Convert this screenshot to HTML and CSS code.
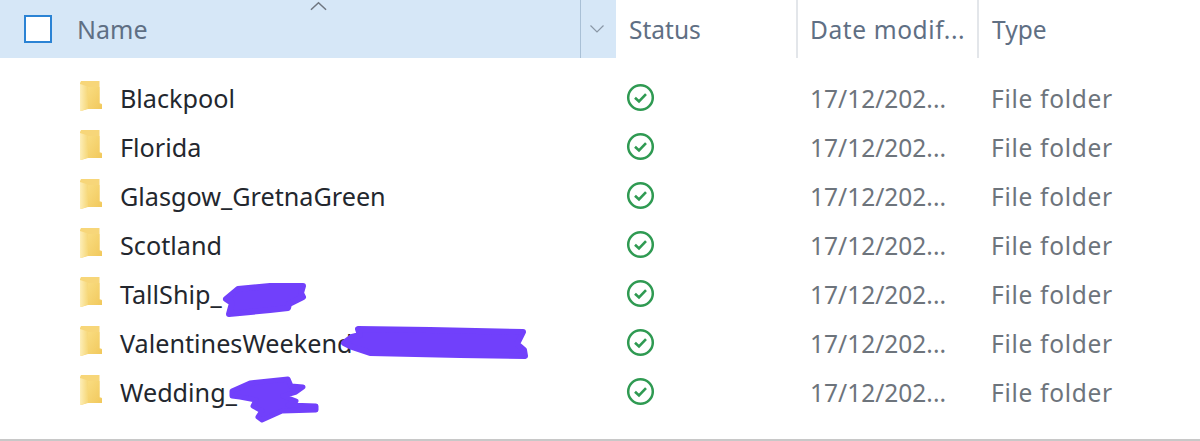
FILE: index.html
```html
<!DOCTYPE html>
<html lang="en">
<head>
<meta charset="utf-8">
<title>Folder list</title>
<link rel="stylesheet" href="styles.css">
</head>
<body>
<svg width="0" height="0" class="defs" aria-hidden="true">
  <defs>
    <linearGradient id="fg" x1="0" x2="1" y1="0" y2="0">
      <stop offset="0" stop-color="#fdeeb8"/>
      <stop offset="1" stop-color="#f6d778"/>
    </linearGradient>
    <linearGradient id="fb" x1="0" x2="1" y1="0" y2="1">
      <stop offset="0" stop-color="#f9dc80"/>
      <stop offset="1" stop-color="#f1c85c"/>
    </linearGradient>
    <symbol id="folder" viewBox="0 0 22 30">
      <path d="M0 2 L1 0 H19.500 V22 L22 23 V28 H8 L1 30 L0 29Z" fill="#f7d679"/>
      <path d="M8 6 H19.500 V23 L22 23.500 V28 H8Z" fill="url(#fb)"/>
      <path d="M0 3 L8 5.500 V27.500 L1 30 L0 29Z" fill="url(#fg)"/>
    </symbol>
    <symbol id="check" viewBox="0 0 29 29">
      <circle cx="14.500" cy="14.500" r="12.300" fill="none" stroke="#2f9a52" stroke-width="2.500"/>
      <path d="M9 14.700 L13 18.500 L20 11.200" fill="none" stroke="#2f9a52" stroke-width="2.600"/>
    </symbol>
  </defs>
</svg>
<main class="view">
  <header class="head">
    <div class="cell-name">
      <span class="box"></span>
      <span>Name</span>
      <svg class="sort" viewBox="0 0 18 10"><path d="M1 9 L9 1.500 L17 9" fill="none" stroke="#6f7680" stroke-width="1.600"/></svg>
    </div>
    <div class="cell-drop">
      <svg class="drop" viewBox="0 0 14 8"><path d="M.5 .5 L7 7 L13.500 .5" fill="none" stroke="#8a97a6" stroke-width="1.200"/></svg>
    </div>
    <div class="cell-status">Status</div>
    <div class="cell-date">Date modif...</div>
    <div class="cell-type">Type</div>
  </header>
  <ul class="rows">
    <li class="row"><span class="r-name"><svg class="fold"><use href="#folder"/></svg>Blackpool</span><span class="r-status"><svg class="ok"><use href="#check"/></svg></span><span class="r-date">17/12/202...</span><span class="r-type">File folder</span></li>
    <li class="row"><span class="r-name"><svg class="fold"><use href="#folder"/></svg>Florida</span><span class="r-status"><svg class="ok"><use href="#check"/></svg></span><span class="r-date">17/12/202...</span><span class="r-type">File folder</span></li>
    <li class="row"><span class="r-name"><svg class="fold"><use href="#folder"/></svg>Glasgow_GretnaGreen</span><span class="r-status"><svg class="ok"><use href="#check"/></svg></span><span class="r-date">17/12/202...</span><span class="r-type">File folder</span></li>
    <li class="row"><span class="r-name"><svg class="fold"><use href="#folder"/></svg>Scotland</span><span class="r-status"><svg class="ok"><use href="#check"/></svg></span><span class="r-date">17/12/202...</span><span class="r-type">File folder</span></li>
    <li class="row"><span class="r-name"><svg class="fold"><use href="#folder"/></svg>TallShip_</span><span class="r-status"><svg class="ok"><use href="#check"/></svg></span><span class="r-date">17/12/202...</span><span class="r-type">File folder</span></li>
    <li class="row"><span class="r-name"><svg class="fold"><use href="#folder"/></svg>ValentinesWeekend</span><span class="r-status"><svg class="ok"><use href="#check"/></svg></span><span class="r-date">17/12/202...</span><span class="r-type">File folder</span></li>
    <li class="row"><span class="r-name"><svg class="fold"><use href="#folder"/></svg>Wedding_</span><span class="r-status"><svg class="ok"><use href="#check"/></svg></span><span class="r-date">17/12/202...</span><span class="r-type">File folder</span></li>
  </ul>
  <svg class="scribble" viewBox="0 0 1200 441" aria-hidden="true">
    <g fill="#7140fb" stroke="#7140fb" stroke-width="6" stroke-linecap="round" stroke-linejoin="round">
      <path d="M226 299 L238 289 L270 286 L303 286 L301 293 L303 297 L289 304 L288 308 L270 310 L229 314 L232 303Z"/>
      <path d="M358 329 L430 330 L523 332 L519 340 L517 344 L524 350 L525 356 L460 355 L370 353 L352 347 L344 343 L352 337 L360 335Z"/>
      <path d="M232 391 L250 383 L288 379 L291 386 L303 387 L296 392 L283 396 L296 401 L288 405 L316 406 L316 410 L282 411 L262 420 L258 417 L262 411 L253 406 L256 400 L240 397 L232 396Z" stroke-width="5"/>
    </g>
  </svg>
  <div class="rule"></div>
</main>
</body>
</html>
```
FILE: styles.css
```css
* { box-sizing: border-box; }
html, body { margin: 0; height: 100%; background: #fff; overflow: hidden; }
.defs { position: absolute; }
.view {
  position: relative;
  width: 1200px;
  height: 441px;
  font-family: "Noto Sans", "Liberation Sans", sans-serif;
  font-size: 24.500px;
  display: flex;
  flex-direction: column;
}
.head, .row {
  display: grid;
  grid-template-columns: 580px 36px 182px 181px 1fr;
  align-items: center;
}
.head {
  height: 58px;
  color: #5f6f84;
  align-items: stretch;
}
.head > div { display: flex; align-items: center; }
.cell-name {
  position: relative;
  background: #d6e7f7;
  padding-left: 24px;
  gap: 25px;
  font-size: 25px;
}
.box {
  width: 28px;
  height: 28px;
  background: #fff;
  border: 2px solid #2b83d4;
}
.sort {
  position: absolute;
  left: 310px;
  top: 1px;
  width: 17px;
  height: 10px;
}
.cell-drop {
  background: #d6e7f7;
  border-left: 1px solid #a9c0d6;
  justify-content: center;
}
.drop { width: 14px; height: 8px; margin-right: 3px; }
.cell-status { padding-left: 13px; border-right: 2px solid #e3e6ea; }
.cell-date { padding-left: 12px; border-right: 2px solid #e3e6ea; letter-spacing: .6px; }
.cell-type { padding-left: 13px; }
.rows {
  list-style: none;
  margin: 0;
  padding: 15px 0 0;
}
.row { height: 49px; color: #6d747c; }
.r-name {
  grid-column: 1 / span 2;
  display: flex;
  align-items: center;
  padding-left: 80px;
  gap: 18px;
  color: #23272e;
  font-size: 25.200px;
}
.fold { width: 22px; height: 30px; flex: none; margin-top: -3px; }
.r-status { padding-left: 10px; display: flex; }
.ok { width: 29px; height: 29px; margin-top: -1px; }
.r-date { padding: 2px 0 0 12px; }
.r-type { padding: 2px 0 0 12px; letter-spacing: .7px; }
.scribble {
  position: absolute;
  inset: 0;
  width: 1200px;
  height: 441px;
  pointer-events: none;
}
.rule {
  position: absolute;
  left: 0;
  right: 0;
  bottom: 0;
  height: 2px;
  background: #c8c8c8;
}
```
